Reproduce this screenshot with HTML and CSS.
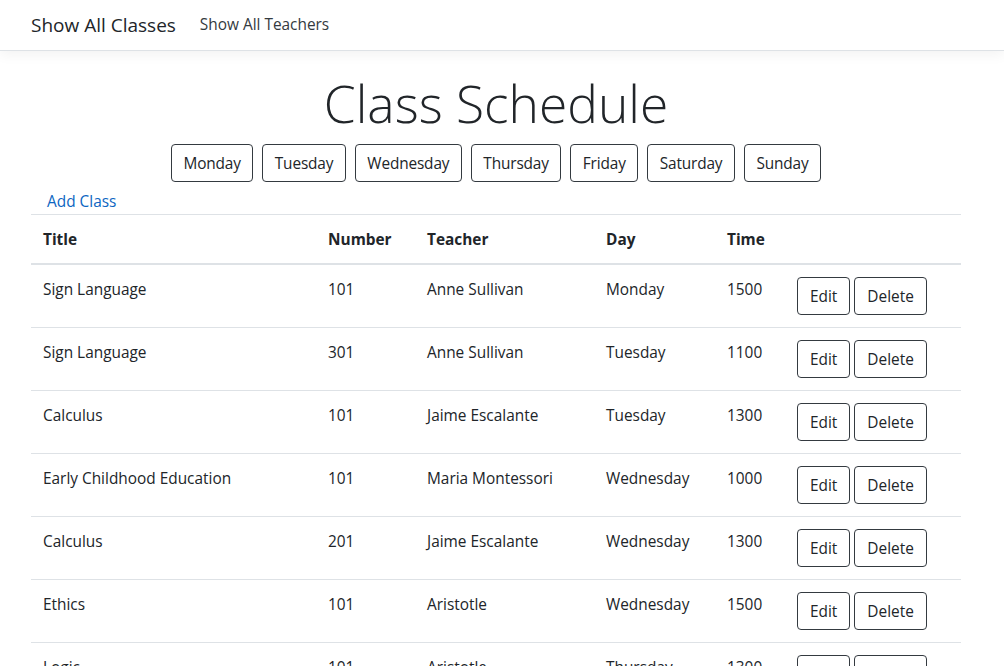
FILE: index.html
```html
<!DOCTYPE html>
<html lang="en">
<head>
<meta charset="utf-8">
<title>Class Schedule</title>
<link rel="stylesheet" href="styles.css">
</head>
<body>
<header class="navbar">
  <div class="container nav-inner">
    <a class="brand" href="#">Show All Classes</a>
    <a class="nav-link" href="#">Show All Teachers</a>
  </div>
</header>
<main class="container">
  <div class="heading">
    <h1 class="display">Class Schedule</h1>
    <div class="days">
      <button class="btn">Monday</button>
      <button class="btn">Tuesday</button>
      <button class="btn">Wednesday</button>
      <button class="btn">Thursday</button>
      <button class="btn">Friday</button>
      <button class="btn">Saturday</button>
      <button class="btn">Sunday</button>
    </div>
  </div>
  <a class="add-link" href="#">Add Class</a>
  <table class="table">
    <colgroup>
      <col class="c-title"><col class="c-number"><col class="c-teacher"><col class="c-day"><col class="c-time"><col class="c-actions">
    </colgroup>
    <thead>
      <tr><th>Title</th><th>Number</th><th>Teacher</th><th>Day</th><th>Time</th><th></th></tr>
    </thead>
    <tbody>
      <tr><td>Sign Language</td><td>101</td><td>Anne Sullivan</td><td>Monday</td><td>1500</td><td class="actions"><button class="btn">Edit</button><button class="btn">Delete</button></td></tr>
      <tr><td>Sign Language</td><td>301</td><td>Anne Sullivan</td><td>Tuesday</td><td>1100</td><td class="actions"><button class="btn">Edit</button><button class="btn">Delete</button></td></tr>
      <tr><td>Calculus</td><td>101</td><td>Jaime Escalante</td><td>Tuesday</td><td>1300</td><td class="actions"><button class="btn">Edit</button><button class="btn">Delete</button></td></tr>
      <tr><td>Early Childhood Education</td><td>101</td><td>Maria Montessori</td><td>Wednesday</td><td>1000</td><td class="actions"><button class="btn">Edit</button><button class="btn">Delete</button></td></tr>
      <tr><td>Calculus</td><td>201</td><td>Jaime Escalante</td><td>Wednesday</td><td>1300</td><td class="actions"><button class="btn">Edit</button><button class="btn">Delete</button></td></tr>
      <tr><td>Ethics</td><td>101</td><td>Aristotle</td><td>Wednesday</td><td>1500</td><td class="actions"><button class="btn">Edit</button><button class="btn">Delete</button></td></tr>
      <tr><td>Logic</td><td>101</td><td>Aristotle</td><td>Thursday</td><td>1300</td><td class="actions"><button class="btn">Edit</button><button class="btn">Delete</button></td></tr>
      <tr><td>Early Childhood Education</td><td>201</td><td>Maria Montessori</td><td>Thursday</td><td>1000</td><td class="actions"><button class="btn">Edit</button><button class="btn">Delete</button></td></tr>
      <tr><td>Calculus</td><td>301</td><td>Jaime Escalante</td><td>Friday</td><td>1100</td><td class="actions"><button class="btn">Edit</button><button class="btn">Delete</button></td></tr>
      <tr><td>Sign Language</td><td>201</td><td>Anne Sullivan</td><td>Friday</td><td>1500</td><td class="actions"><button class="btn">Edit</button><button class="btn">Delete</button></td></tr>
      <tr><td>Ethics</td><td>201</td><td>Aristotle</td><td>Saturday</td><td>1000</td><td class="actions"><button class="btn">Edit</button><button class="btn">Delete</button></td></tr>
      <tr><td>Logic</td><td>201</td><td>Aristotle</td><td>Saturday</td><td>1300</td><td class="actions"><button class="btn">Edit</button><button class="btn">Delete</button></td></tr>
      <tr><td>Early Childhood Education</td><td>301</td><td>Maria Montessori</td><td>Sunday</td><td>1100</td><td class="actions"><button class="btn">Edit</button><button class="btn">Delete</button></td></tr>
      <tr><td>Calculus</td><td>401</td><td>Jaime Escalante</td><td>Sunday</td><td>1500</td><td class="actions"><button class="btn">Edit</button><button class="btn">Delete</button></td></tr>
      <tr><td>Sign Language</td><td>401</td><td>Anne Sullivan</td><td>Sunday</td><td>1600</td><td class="actions"><button class="btn">Edit</button><button class="btn">Delete</button></td></tr>
    </tbody>
  </table>
</main>
</body>
</html>
```

FILE: styles.css
```css
html {
  overflow-y: scroll;
}
::-webkit-scrollbar {
  width: 5px;
}
::-webkit-scrollbar-track {
  background: #f0f0f0;
}
::-webkit-scrollbar-thumb {
  background: #c8c8c8;
}
* {
  box-sizing: border-box;
}
body {
  margin: 0;
  font-family: "Open Sans", "Liberation Sans", sans-serif;
  font-size: 15.4px;
  line-height: 24px;
  color: #212529;
  background: #fff;
}
.container {
  width: 960px;
  margin: 0 16px;
  padding: 0 15px;
}
.navbar {
  height: 51px;
  border-bottom: 1px solid #dee2e6;
  box-shadow: 0 4px 12px rgba(0, 0, 0, 0.05);
  margin-bottom: 16px;
}
.nav-inner {
  display: flex;
  align-items: center;
  height: 50px;
}
.brand {
  font-size: 19px;
  line-height: 30px;
  color: #212529;
  text-decoration: none;
  margin-right: 16px;
}
.nav-link {
  padding: 8px;
  color: #343a40;
  text-decoration: none;
  font-size: 15.4px;
}
.heading {
  text-align: center;
}
.display {
  font-size: 51.5px;
  font-weight: 300;
  line-height: 67px;
  margin: 0 0 10px;
  padding-top: 3px;
}
.days {
  display: flex;
  justify-content: center;
  gap: 9px;
  margin-top: -3px;
}
.days .btn {
  letter-spacing: -0.15px;
  padding-left: 11.5px;
  padding-right: 11.5px;
}
.btn {
  font-family: inherit;
  font-size: 15.4px;
  line-height: 24px;
  padding: 7px 12px 5px;
  color: #212529;
  background: #fff;
  border: 1px solid #343a40;
  border-radius: 4px;
}
.add-link {
  display: inline-block;
  margin-top: 7px;
  padding-top: 1px;
  line-height: 23px;
  padding-left: 16px;
  color: #0d66c2;
  text-decoration: none;
}
.table {
  width: 100%;
  table-layout: fixed;
  border-collapse: collapse;
  margin-bottom: 16px;
}
.c-title { width: 285px; }
.c-number { width: 99px; }
.c-teacher { width: 179px; }
.c-day { width: 121px; }
.c-time { width: 70px; }
.c-actions { width: 176px; }
.table th,
.table td {
  padding: 13px 12px 11px;
  text-align: left;
  vertical-align: top;
  border-top: 1px solid #dee2e6;
}
.table td.actions {
  padding-top: 12px;
  padding-bottom: 12px;
}
.table th {
  font-weight: 700;
  border-bottom: 2px solid #dee2e6;
}
.actions {
  white-space: nowrap;
}
.actions .btn + .btn {
  margin-left: 4px;
}
```
